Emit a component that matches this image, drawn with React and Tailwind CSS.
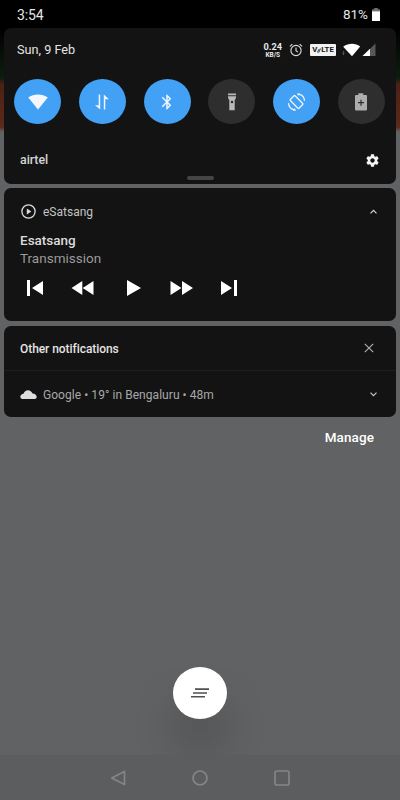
const toggles = [
	{ name: 'Wi-Fi', icon: WifiIcon, on: true },
	{ name: 'Mobile data', icon: DataIcon, on: true },
	{ name: 'Bluetooth', icon: BluetoothIcon, on: true },
	{ name: 'Flashlight', icon: TorchIcon, on: false },
	{ name: 'Auto-rotate', icon: RotateIcon, on: true },
	{ name: 'Battery saver', icon: SaverIcon, on: false },
];

function WifiIcon() {
	return (
		<svg width="22" height="18" viewBox="0 0 22 18" className="fill-[#f4f8fc]">
			<path d="M1.2 4.5C4 2.4 7.4 1.4 11 1.4s7 1 9.800 3.100L11 16.600z" />
		</svg>
	);
}

function DataIcon() {
	return (
		<svg width="16" height="16" viewBox="0 0 16 16" className="fill-[#eef6fd]">
			<path d="M4.700 0.500H6.200v15L1 11.300h3.700zM11.300 15.500H9.800V0.500l5.200 4.700h-3.700z" />
		</svg>
	);
}

function BluetoothIcon() {
	return (
		<svg width="18" height="18" viewBox="0 0 24 24" className="fill-[#eef6fd]">
			<path d="M17.710 7.710L12 2h-1v7.590L6.410 5 5 6.410 10.590 12 5 17.590 6.410 19 11 14.410V22h1l5.710-5.710-4.300-4.290 4.300-4.290zM13 5.830l1.880 1.880L13 9.590V5.830zm1.880 10.460L13 18.170v-3.760l1.880 1.880z" />
		</svg>
	);
}

function TorchIcon() {
	return (
		<svg width="12" height="18" viewBox="0 0 12 18" className="fill-[#b9b9b9]">
			<path d="M2 0.500h8v1.700H2zM2 3.200h8v1.600L8.700 7.200v10H3.300v-10L2 4.800z" />
			<circle cx="6" cy="9" r="1.300" className="fill-[#2e2e2e]" />
		</svg>
	);
}

function RotateIcon() {
	return (
		<svg width="19" height="18" viewBox="0 0 24 24" className="fill-none stroke-[#eef6fd]">
			<rect x="7.500" y="3.800" width="9" height="16.400" rx="1" strokeWidth="1.700" transform="rotate(-45 12 12)" />
			<path d="M14.500 1.600C19 2.300 22.400 6 22.700 10.500M9.500 22.400C5 21.700 1.600 18 1.300 13.500" strokeWidth="1.600" />
			<path d="M12.500 0.500l4.500 0.300-2.700 3zM11.500 23.500l-4.500-0.300 2.700-3z" stroke="none" className="fill-[#eef6fd]" />
		</svg>
	);
}

function SaverIcon() {
	return (
		<svg width="14" height="20" viewBox="0 0 14 20">
			<path d="M4.300 3V1.300h5V3H12a1 1 0 0 1 1 1v13.500a1 1 0 0 1-1 1H2a1 1 0 0 1-1-1V4a1 1 0 0 1 1-1z" className="fill-[#adadad]" />
			<path d="M6.400 7.700h1.200v2.400H10v1.200H7.600v2.400H6.400v-2.400H4v-1.200h2.400z" className="fill-[#2e2e2e]" />
		</svg>
	);
}

function StatusBar() {
	return (
		<div className="flex h-7 items-center justify-between bg-black pl-[17px] pr-5 pt-px text-sm text-[#e6e6e6]">
			<span className="tracking-[-0.1px]">3:54</span>
			<div className="flex items-center gap-[4px]">
				<span className="text-[13.500px]">81%</span>
				<svg width="8" height="13" viewBox="0 0 8 13">
					<path d="M2.200 0h3.600v1.300H8V3.800H0V1.300h2.200z" className="fill-[#707070]" />
					<path d="M0 3.300h8V13H0z" className="fill-white" />
				</svg>
			</div>
		</div>
	);
}

function StatusIcons() {
	return (
		<div className="flex items-center">
			<div className="flex flex-col items-center pb-[2px] font-bold text-[#e8e8e8]">
				<span className="text-[9.200px] leading-[11px]">0.24</span>
				<span className="text-[6.500px] leading-[6px]">KB/S</span>
			</div>
			<svg width="14" height="14" viewBox="0 0 14 14" className="ml-[7px] fill-none stroke-[#dedede]">
				<circle cx="7" cy="7.500" r="5.100" strokeWidth="1.100" />
				<path d="M7 4.500v3.300l2 1.300M0.900 3.300L3.400 1.100M13.100 3.300L10.600 1.100" strokeWidth="1.100" />
			</svg>
			<div className="ml-[7px] flex h-[12px] w-[26px] items-center justify-center rounded-[1px] bg-[#f2f2f2] text-[7.800px] font-bold leading-none text-[#161616]">
				<span>V</span>
				<svg width="4" height="7" viewBox="0 0 5 7" className="fill-none stroke-[#161616]">
					<path d="M0.300 6L2.800 1.500M2 6.300L4.600 1" strokeWidth="1" />
				</svg>
				<span>LTE</span>
			</div>
			<svg width="19" height="14" viewBox="0 0 19 14" className="ml-[6px]">
				<path d="M1.200 3.800C4 1.600 7 0.800 10 0.800s5.700 0.800 8.200 2.800L10 13.200z" className="fill-white" />
				<path d="M0.500 9.500l1-1.300 1 1.300zM0.500 10.600h2l-1 1.300z" className="fill-[#8a8a8a]" />
			</svg>
			<svg width="14" height="14" viewBox="0 0 14 14" className="ml-px">
				<path d="M13.500 0.500V13H0.500z" className="fill-[#575757]" />
				<path d="M8 5.800V13H0.500z" className="fill-white" />
			</svg>
		</div>
	);
}

function QuickSettings() {
	return (
		<section className="flex h-[156px] flex-col rounded-[7px] bg-[#131313]">
			<div className="flex h-[51px] items-center justify-between pb-[7px] pl-[13px] pr-[20px]">
				<span className="text-[12.700px] text-[#e4e4e4]">Sun, 9 Feb</span>
				<StatusIcons />
			</div>
			<div className="flex justify-between pl-[10px] pr-[11px]">
				{toggles.map(({ name, icon: Icon, on }) => (
					<button
						key={name}
						aria-label={name}
						className={`flex h-[45px] w-[47px] items-center justify-center rounded-[50%] ${on ? 'bg-[#42a0f5]' : 'bg-[#2e2e2e]'}`}
					>
						<Icon />
					</button>
				))}
			</div>
			<div className="flex h-[52px] items-center justify-between pl-4 pr-[16px] pt-[21px]">
				<span className="text-[12.400px] font-medium tracking-[-0.050px] text-[#d4d4d4]">airtel</span>
				<svg width="15" height="15" viewBox="0 0 24 24" className="fill-[#f4f4f4]">
					<path d="M19.430 12.980c.040-.320.070-.640.070-.980s-.030-.660-.070-.980l2.110-1.650c.190-.150.240-.420.120-.640l-2-3.460c-.120-.220-.390-.300-.610-.220l-2.490 1c-.520-.400-1.080-.730-1.690-.980l-.380-2.650C14.460 2.180 14.250 2 14 2h-4c-.250 0-.460.180-.490.420l-.380 2.650c-.610.250-1.170.590-1.690.980l-2.490-1c-.230-.090-.490 0-.610.220l-2 3.460c-.130.220-.070.490.120.640l2.110 1.650c-.040.320-.070.650-.070.980s.030.660.070.980l-2.110 1.650c-.190.150-.240.420-.120.640l2 3.460c.120.220.390.300.610.220l2.490-1c.520.400 1.080.730 1.690.980l.380 2.650c.030.240.240.420.490.420h4c.250 0 .460-.180.490-.420l.380-2.650c.610-.250 1.170-.590 1.690-.980l2.490 1c.230.090.490 0 .610-.220l2-3.460c.120-.220.070-.490-.120-.640l-2.110-1.650zM12 15.500c-1.930 0-3.500-1.570-3.500-3.500s1.570-3.500 3.500-3.500 3.500 1.570 3.500 3.500-1.570 3.500-3.500 3.500z" />
				</svg>
			</div>
			<div className="mx-auto h-1 w-[27px] rounded-sm bg-[#454545]" />
		</section>
	);
}

function MediaControls() {
	return (
		<div className="flex h-4 items-center pl-[23px]">
			<svg width="16" height="16" viewBox="0 0 16 16" className="fill-white">
				<path d="M0 0h3v16H0zM16 1v14L5 8z" />
			</svg>
			<svg width="23" height="16" viewBox="0 0 23 16" className="ml-[28px] fill-white">
				<path d="M11.300 1v14L0.500 8zM22.500 1v14L11.700 8z" />
			</svg>
			<svg width="14" height="16" viewBox="0 0 14 16" className="ml-[33px] fill-white">
				<path d="M0 0l14 8-14 8z" />
			</svg>
			<svg width="23" height="16" viewBox="0 0 23 16" className="ml-[29px] fill-white">
				<path d="M0.500 1v14l11-7zM12 1v14l11-7z" />
			</svg>
			<svg width="16" height="16" viewBox="0 0 16 16" className="ml-[28px] fill-white">
				<path d="M0 1v14l11-7zM13 0h3v16h-3z" />
			</svg>
		</div>
	);
}

function MediaCard() {
	return (
		<section className="mt-1 h-[133px] rounded-[7px] bg-[#131313] pt-[15px]">
			<div className="flex h-4 items-center pl-[17px] pr-[19px]">
				<svg width="15" height="15" viewBox="0 0 15 15" className="fill-none stroke-[#dcdcdc]">
					<circle cx="7.500" cy="7.500" r="6.600" strokeWidth="1.300" />
					<path d="M5.800 4.500v6l4.500-3z" stroke="none" className="fill-[#dcdcdc]" />
				</svg>
				<span className="ml-[7px] pt-px text-xs text-[#c4c4c4]">eSatsang</span>
				<svg width="7" height="5" viewBox="0 0 7 5" className="ml-auto fill-none stroke-[#d8d8d8]">
					<path d="M0.500 4.300l3-3 3 3" strokeWidth="1.100" />
				</svg>
			</div>
			<h2 className="mt-[13px] pl-4 text-[13.500px] font-medium leading-4 text-[#dcdcdc]">Esatsang</h2>
			<p className="mt-0.5 pl-4 text-[13.500px] leading-4 text-[#9a9a9a]">Transmission</p>
			<div className="mt-[14px]">
				<MediaControls />
			</div>
		</section>
	);
}

function OtherNotifications() {
	return (
		<section className="mt-[5px] h-[91px] rounded-[7px] bg-[#131313]">
			<div className="flex h-[45px] items-center justify-between border-b border-[#1e1e1e] pl-4 pr-[22px]">
				<h2 className="pt-px text-xs font-medium tracking-[-0.06px] text-[#e4e4e4]">Other notifications</h2>
				<svg width="10" height="10" viewBox="0 0 10 10" className="fill-none stroke-[#b4b4b4]">
					<path d="M0.800 0.800l8.400 8.400M9.200 0.800L0.800 9.200" strokeWidth="1.100" />
				</svg>
			</div>
			<div className="flex h-[46px] items-center pl-4 pr-[19px]">
				<svg width="17" height="9" viewBox="0 0 17 9" className="fill-[#dedede]">
					<path d="M2.500 9A2.300 2.300 0 0 1 0.300 6.700C0.300 5 2 4 3.500 3.800 4.300 1.500 6 0.300 7.800 0.300c2.200 0 4 1.300 4.700 3.200 2.400 0 4.200 1.600 4.200 3.500 0 1.200-0.900 2-2.200 2z" />
				</svg>
				<span className="ml-[6px] pt-[2px] text-xs tracking-[0.050px] text-[#a8a8a8]">Google • 19° in Bengaluru • 48m</span>
				<svg width="7" height="5" viewBox="0 0 7 5" className="ml-auto fill-none stroke-[#c8c8c8]">
					<path d="M0.500 0.700l3 3 3-3" strokeWidth="1.200" />
				</svg>
			</div>
		</section>
	);
}

function NavBar() {
	return (
		<nav className="flex h-[45px] items-center justify-between bg-[#5b5c5e]/80 px-[110px]">
			<svg width="16" height="16" viewBox="0 0 16 16" className="fill-none stroke-[#858585]">
				<path d="M14.500 1.500v13L1.700 8z" strokeWidth="1.700" strokeLinejoin="round" />
			</svg>
			<svg width="16" height="16" viewBox="0 0 16 16" className="fill-none stroke-[#858585]">
				<circle cx="8" cy="8" r="7" strokeWidth="1.700" />
			</svg>
			<svg width="16" height="16" viewBox="0 0 16 16" className="fill-none stroke-[#858585]">
				<rect x="1" y="1" width="14" height="14" rx="2" strokeWidth="1.700" />
			</svg>
		</nav>
	);
}

export default function App() {
	return (
		<div className="flex h-[800px] w-[400px] flex-col overflow-hidden bg-[#616264] bg-[linear-gradient(to_bottom,#000_0px,#000_30px,#071008_55px,#0c1c10_78px,#4b2015_84px,#5b2b1c_127px,#616264_132px)] font-['Roboto','Noto_Sans',sans-serif]">
			<StatusBar />
			<main className="flex flex-1 flex-col px-1">
				<QuickSettings />
				<MediaCard />
				<OtherNotifications />
				<button className="mr-[22px] mt-[10px] self-end text-[13.500px] font-medium leading-5 tracking-[0.1px] text-white">Manage</button>
				<button
					aria-label="Clear all"
					className="mb-9 mt-auto flex h-[52px] w-[54px] items-center justify-center self-center rounded-[50%] bg-white shadow-[0_34px_44px_0_rgba(0,0,0,0.18)]"
				>
					<svg width="18" height="10" viewBox="0 0 18 10" className="fill-[#505050]">
						<path d="M4 0.300h14v1.600H4zM2 4.200h14v1.600H2zM0 8h14v1.600H0z" />
					</svg>
				</button>
			</main>
			<NavBar />
		</div>
	);
}
